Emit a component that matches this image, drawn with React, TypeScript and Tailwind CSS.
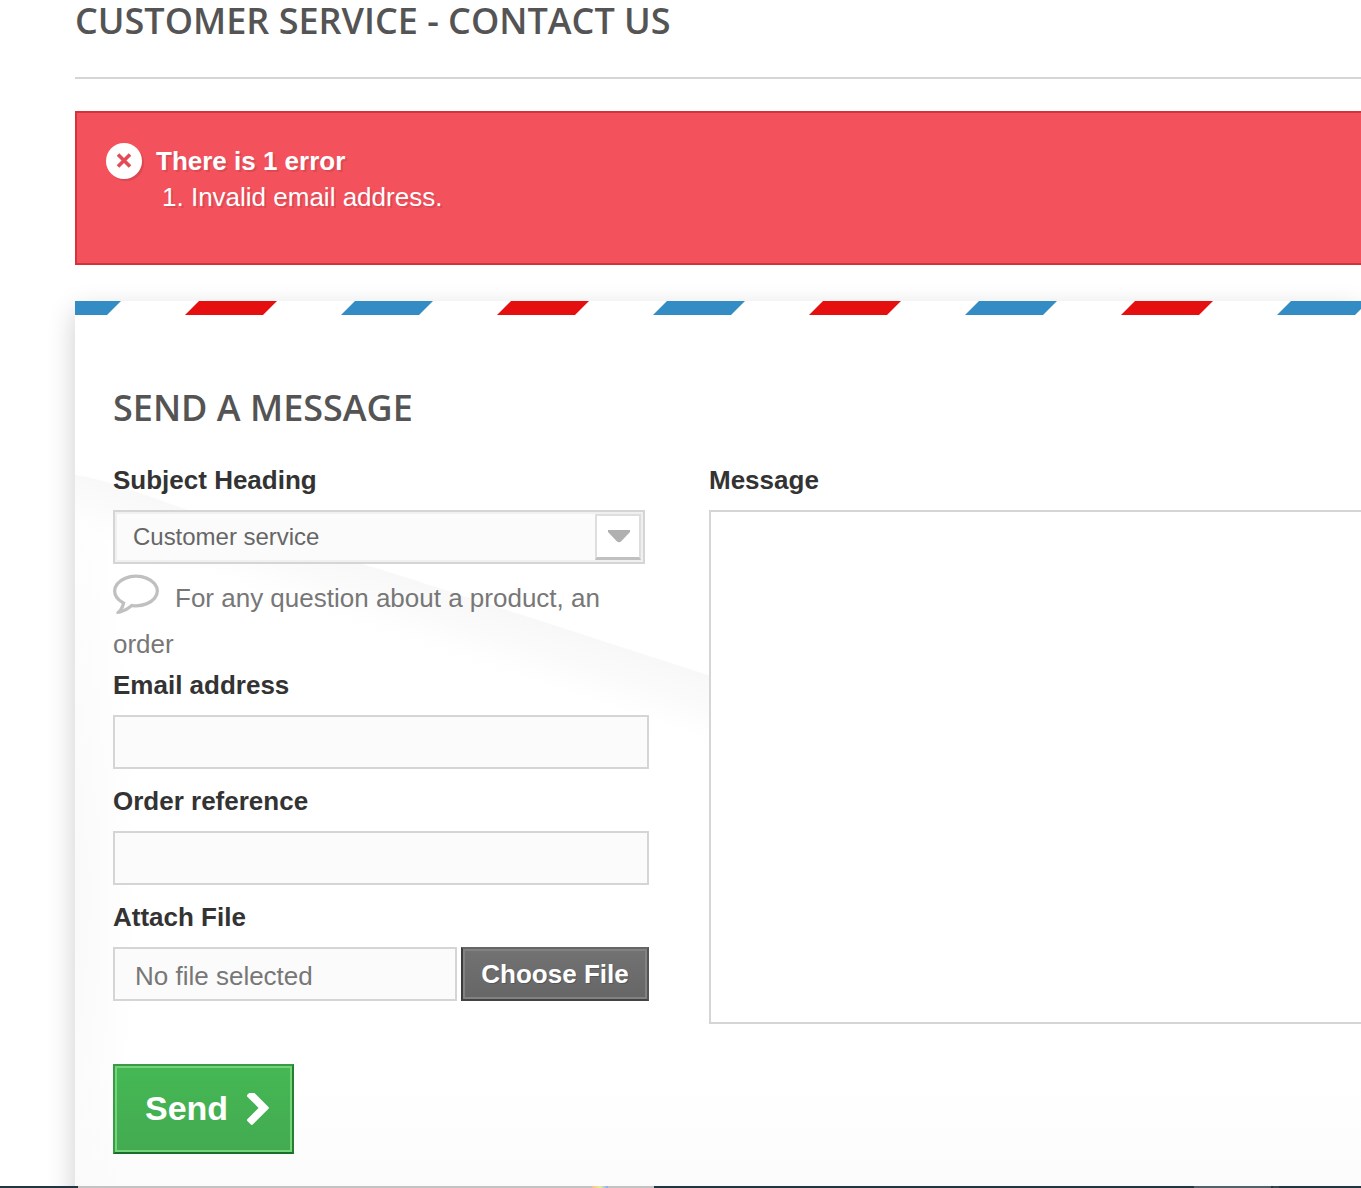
import React from "react";

const COMMENT_ICON =
  "M896 384q-204 0-381.5 69.5t-282 187.5-104.5 255q0 112 71.5 213.5t201.5 175.5l87 50-27 96q-24 91-70 172 152-63 275-171l43-38 57 6q69 8 130 8 204 0 381.5-69.5t282-187.5 104.5-255-104.5-255-282-187.5-381.5-69.5zm896 512q0 174-120 321.5t-326 233-450 85.5q-70 0-145-8-198 175-460 242-49 14-114 22h-5q-15 0-27-10.5t-16-27.5v-1q-3-4-.5-12t2-10 4.5-9.5l6-9 7-8.5 8-9q7-8 31-34.5t34.5-38 31-39.5 32.5-51 27-59 26-76q-157-89-247.5-220t-90.5-281q0-174 120-321.5t326-233 450-85.5 450 85.5 326 233 120 321.5z";
const CHEVRON_ICON =
  "M1363 877l-742 742q-19 19-45 19t-45-19l-166-166q-19-19-19-45t19-45l531-531-531-531q-19-19-19-45t19-45l166-166q19-19 45-19t45 19l742 742q19 19 19 45t-19 45z";

function AirmailStripes() {
  return (
    <svg className="block h-[14px] w-full" aria-hidden="true">
      <defs>
        <pattern id="airmail" x="-46" y="0" width="312" height="14" patternUnits="userSpaceOnUse">
          <polygon points="0,14 14,0 92,0 78,14" fill="#338cc3" />
          <polygon points="156,14 170,0 248,0 234,14" fill="#e50f0f" />
        </pattern>
      </defs>
      <rect width="100%" height="14" fill="url(#airmail)" />
    </svg>
  );
}

function EnvelopeFold() {
  return (
    <svg className="pointer-events-none absolute left-0 top-[174px]" width="636" height="300" aria-hidden="true">
      <defs>
        <linearGradient id="fold" gradientUnits="userSpaceOnUse" x1="318" y1="98" x2="296" y2="164">
          <stop offset="0" stopColor="#f8f8f8" />
          <stop offset="0.45" stopColor="#fbfbfb" />
          <stop offset="1" stopColor="#fefefe" stopOpacity="0" />
        </linearGradient>
      </defs>
      <path d="M0 0 C30 4 70 20 110 34 C180 57 230 70 284 88 C350 108 400 125 460 144 L636 201 V300 H0Z" fill="url(#fold)" />
    </svg>
  );
}

function Label({ children }: { children: React.ReactNode }) {
  return <label className="block h-9 text-[26px] font-bold leading-9 text-[#333]">{children}</label>;
}

export default function App() {
  return (
    <div className="flex h-[1188px] w-[1361px] flex-col overflow-hidden bg-white font-['Liberation_Sans',Arial,sans-serif] text-[26px] text-[#777]">
      <div className="h-[1186px] shrink-0 overflow-hidden pl-[75px]">
        <h1 className="h-[79px] border-b-2 border-[#d6d4d4] font-['Open_Sans',sans-serif] text-[36px] font-semibold leading-[42px] text-[#555454]">
          CUSTOMER SERVICE - CONTACT US
        </h1>

        <div className="mt-8 flex h-[154px] border-2 border-r-0 border-[#d4323d] bg-[#f3515c] pl-[26px] pt-[27px] text-white [text-shadow:2px_2px_rgba(0,0,0,0.1)]">
          <svg viewBox="0 0 42 42" className="h-[42px] w-[42px] shrink-0 drop-shadow-[2px_2px_0_rgba(0,0,0,0.1)]">
            <circle cx="21" cy="21" r="18" fill="#fff" />
            <path d="M15 14.5L27 26.5M27 14.5L15 26.5" stroke="#e34c57" strokeWidth="3.6" />
          </svg>
          <div className="ml-[11px] pt-[3px] leading-9">
            <p className="font-bold">There is 1 error</p>
            <p className="pl-[6px]">1. Invalid email address.</p>
          </div>
        </div>

        <form className="relative mt-9 h-[1000px] bg-white bg-[radial-gradient(ellipse_60px_460px_at_0_600px,#f9f9f9,transparent),linear-gradient(to_bottom,transparent_770px,#fbfbfb_900px)] shadow-[0_10px_26px_rgba(0,0,0,0.2)]">
          <EnvelopeFold />
          <div className="relative">
            <AirmailStripes />
            <div className="pl-[38px] pt-[68px]">
              <h3 className="h-[50px] font-['Open_Sans',sans-serif] text-[36px] font-semibold leading-[50px] text-[#555454]">SEND A MESSAGE</h3>
              <div className="mt-[29px] flex">
                <div className="w-[536px] shrink-0">
                  <Label>Subject Heading</Label>
                  <div className="mt-3 flex h-[54px] w-[532px] items-center justify-between border-2 border-[#d6d4d4] bg-[#fbfbfb] pl-[18px] pr-[2px] text-[24px] text-[#666] shadow-[inset_0_0_0_2px_#f0f0f0]">
                    <span className="tracking-[-0.02px]">Customer service</span>
                    <span className="flex h-[46px] w-[46px] items-center justify-center border-2 border-b-[3px] border-[#dedede] border-b-[#c0c0c0] bg-white">
                      <svg width="22" height="13" viewBox="0 0 22 13" className="ml-[2px]"><path d="M0 0H22V2L13 11.5Q11 13 9 11.5L0 2Z" fill="#b0b0b0" /></svg>
                    </span>
                  </div>
                  <p className="h-[103px] pt-1 leading-[46px]">
                    <svg viewBox="0 0 1792 1792" className="mr-4 inline-block h-[46px] w-[46px] align-[-7px]" fill="#c0c0c0"><path d={COMMENT_ICON} /></svg>
                    For any question about a product, an order
                  </p>
                  <Label>Email address</Label>
                  <input className="mt-3 block h-[54px] w-full border-2 border-[#d6d4d4] bg-[#fbfbfb] px-4" aria-label="Email address" />
                  <div className="mt-[14px]"><Label>Order reference</Label></div>
                  <input className="mt-3 block h-[54px] w-full border-2 border-[#d6d4d4] bg-[#fbfbfb] px-4" aria-label="Order reference" />
                  <div className="mt-[14px]"><Label>Attach File</Label></div>
                  <div className="mt-3 flex h-[54px] gap-1">
                    <div className="w-[344px] border-2 border-[#d6d4d4] bg-[#fbfbfb] pl-5 leading-[54px]">No file selected</div>
                    <button type="button" className="w-[188px] border-2 border-b-[#424242] border-l-[#3c3c3c] border-r-[#555] border-t-[#666] bg-linear-to-b from-[#727272] to-[#666] text-[26px] font-bold leading-[50px] text-white shadow-[inset_0_0_0_2px_#828282] [text-shadow:1px_1px_rgba(0,0,0,0.2)]">Choose File</button>
                  </div>
                  <button type="button" className="mt-[63px] flex h-[90px] w-[181px] items-center border-2 border-b-[#196f28] border-l-[#399a49] border-r-[#247f32] border-t-[#399a49] bg-linear-to-b from-[#45b854] to-[#43aa51] pb-[2px] pl-[30px] text-[34px] font-bold text-white shadow-[inset_0_0_0_2px_#74d578]">
                    Send
                    <svg viewBox="356 128 1026 1510" className="ml-[19px] mt-px h-[32px] w-[22px]" fill="#fff"><path d={CHEVRON_ICON} /></svg>
                  </button>
                </div>
                <div className="ml-[60px] w-[652px] shrink-0">
                  <Label>Message</Label>
                  <textarea className="mt-3 block h-[514px] w-[672px] resize-none border-2 border-[#d6d4d4] bg-white" aria-label="Message" />
                </div>
              </div>
            </div>
          </div>
        </form>
      </div>

      <div className="flex h-[2px] shrink-0 bg-[#203642]">
        <div className="ml-[78px] w-[576px] bg-[#c3c3c3] pl-[514px]">
          <div className="h-[2px] w-4 bg-linear-to-r from-[#f6bd9c] via-[#e6ee90] to-[#8fa8f4]" />
        </div>
        <div className="ml-[540px] w-[77px] bg-[#52626c]" />
        <div className="ml-[2px] w-[6px] bg-[#374852]" />
      </div>
    </div>
  );
}
